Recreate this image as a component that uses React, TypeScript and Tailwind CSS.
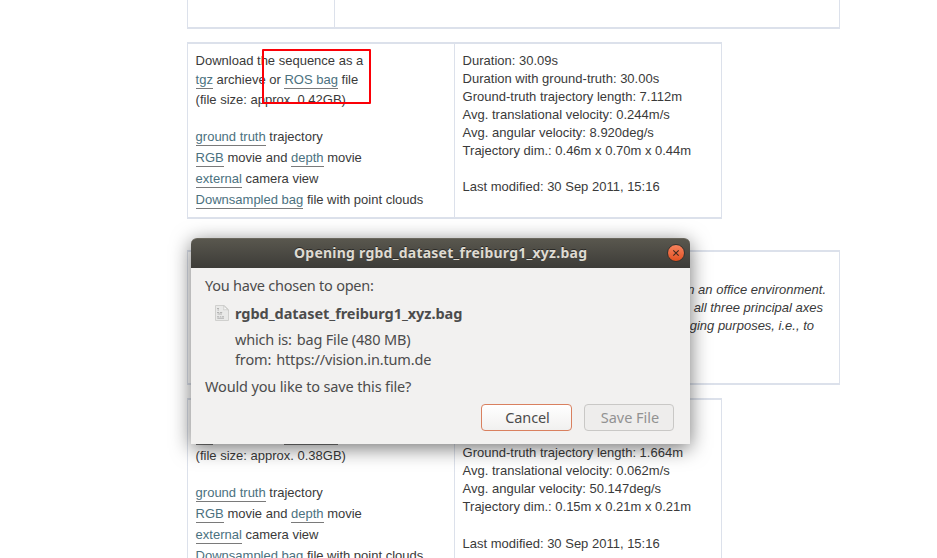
import type { ReactNode } from "react";

function Link({ children }: { children: ReactNode }) {
  return <a className="border-b border-[#7a7a7a] pb-px text-[#4b7180]">{children}</a>;
}

function Line({ className = "h-[21px]", children }: { className?: string; children?: ReactNode }) {
  return <div className={`whitespace-nowrap ${className}`}>{children}</div>;
}

type Sequence = {
  duration: string;
  truth: string;
  size: string;
  stats: string[];
  gap: string;
};

const sequences: Sequence[] = [
  {
    duration: "30.09s",
    truth: "30.00s",
    size: "0.42GB",
    stats: [
      "Ground-truth trajectory length: 7.112m",
      "Avg. translational velocity: 0.244m/s",
      "Avg. angular velocity: 8.920deg/s",
      "Trajectory dim.: 0.46m x 0.70m x 0.44m",
    ],
    gap: "h-[18px]",
  },
  {
    duration: "27.67s",
    truth: "27.67s",
    size: "0.38GB",
    stats: [
      "Ground-truth trajectory length: 1.664m",
      "Avg. translational velocity: 0.062m/s",
      "Avg. angular velocity: 50.147deg/s",
      "Trajectory dim.: 0.15m x 0.21m x 0.21m",
    ],
    gap: "h-[19px]",
  },
];

function SequenceTable({ data }: { data: Sequence }) {
  return (
    <section className="flex h-[177px] w-[535px] shrink-0 border-x border-y-2 border-[#dce1eb]">
      <div className="w-[267px] border-r border-[#dce1eb] pt-[8px] pl-[7.6px]">
        <Line className="h-[19px]">Download the sequence as a</Line>
        <Line className="h-[20px]">
          <Link>tgz</Link> archieve or <Link>ROS bag</Link> file
        </Line>
        <Line className="h-[37px]">(file size: approx. {data.size})</Line>
        <Line>
          <Link>ground truth</Link> trajectory
        </Line>
        <Line>
          <Link>RGB</Link> movie and <Link>depth</Link> movie
        </Line>
        <Line>
          <Link>external</Link> camera view
        </Line>
        <Line>
          <Link>Downsampled bag</Link> file with point clouds
        </Line>
      </div>
      <div className="pt-[8px] pl-[7.6px]">
        <Line className="h-[18px]">Duration: {data.duration}</Line>
        <Line className="h-[18px]">Duration with ground-truth: {data.truth}</Line>
        {data.stats.map((s) => (
          <Line key={s} className="h-[18px]">
            {s}
          </Line>
        ))}
        <div className={data.gap} />
        <Line className="h-[18px]">Last modified: 30 Sep 2011, 15:16</Line>
      </div>
    </section>
  );
}

function FileIcon() {
  return (
    <svg width="14" height="16" viewBox="0 0 14 16" className="shrink-0">
      <path d="M.5.5h8.8l4.2 4v11H.5z" fill="#e9e9e8" stroke="#d0d0ce" />
      <path d="M8.5.8c.6 1.6.4 3 .1 4.2 1.6-.5 3.3-.4 4.7.1z" fill="#fafafa" stroke="#c9c9c7" strokeWidth=".8" />
      <path d="M2 3.5h2M2.5 5h1.5M2 7.5h2M4.8 7.5h2.4M2.5 9h4.5M2 11.8h2M4.8 11.8h1.5M7 11.8h2M2.3 13.3h6.7" stroke="#b3b3b2" strokeWidth="1.1" />
    </svg>
  );
}

function Dialog() {
  return (
    <div className="absolute top-[238px] left-[191px] flex h-[206px] w-[499px] flex-col rounded-t-[6px] bg-[#f2f1f0] font-['Noto_Sans',sans-serif] text-[14.5px] text-[#4c4c4c] shadow-[0_4px_20px_rgba(0,0,0,0.55)]">
      <header className="flex h-[30px] shrink-0 items-center rounded-t-[6px] border-t border-[#6a675d] bg-linear-to-b from-[#59574e] to-[#3d3c38] pr-[5px] pl-[103px] font-bold text-[#dfdbd2]">
        <span className="flex-1 pb-[2px] text-[14px] leading-[20px] tracking-[0.24px] whitespace-nowrap [text-shadow:0_-1px_0_#2b2a27]">
          Opening rgbd_dataset_freiburg1_xyz.bag
        </span>
        <button className="flex size-[18px] -translate-y-px items-center justify-center rounded-full border border-[#34332f] bg-linear-to-b from-[#f6825c] to-[#e1501f]">
          <svg width="8" height="8" viewBox="0 0 8 8">
            <path d="M1.3 1.3l5.4 5.4M6.7 1.3L1.3 6.7" stroke="#402a1f" strokeWidth="1.1" />
          </svg>
        </button>
      </header>
      <div className="flex flex-1 flex-col pt-[7px] pr-[16px] pl-[14px] leading-[20px] whitespace-nowrap">
        <p className="tracking-[-0.24px]">You have chosen to open:</p>
        <div className="mt-[8px] flex h-[20px] items-center gap-[6px] pl-[10px]">
          <FileIcon />
          <span className="font-bold tracking-[-0.05px]">rgbd_dataset_freiburg1_xyz.bag</span>
        </div>
        <div className="mt-[6px] flex gap-[5px] pl-[30px] tracking-[-0.18px]">
          <span>which is:</span>
          <span>bag File (480 MB)</span>
        </div>
        <div className="flex gap-[5px] pl-[30px] tracking-[-0.15px]">
          <span>from:</span>
          <span>https://vision.in.tum.de</span>
        </div>
        <p className="mt-[7px] tracking-[-0.15px]">Would you like to save this file?</p>
        <div className="mt-[8px] flex justify-end gap-[12px]">
          <button className="h-[27px] w-[91px] rounded-[4px] border border-[#d9805f] bg-linear-to-b from-white to-[#f1f0ef] pb-[2px] pl-[2px] tracking-[-0.1px]">
            Cancel
          </button>
          <button className="h-[27px] w-[90px] rounded-[4px] border border-[#c9c8c6] bg-[#eeedec] pb-[2px] pl-[2px] text-[#929292]">
            Save File
          </button>
        </div>
      </div>
    </div>
  );
}

export default function App() {
  return (
    <main className="relative h-[558px] w-[937px] overflow-hidden bg-white font-['Liberation_Sans',Arial,sans-serif] text-[13px] leading-[18px] text-[#3a3a3a]">
      <div className="flex flex-col pl-[187px]">
        <section className="flex h-[29px] w-[653px] shrink-0 border-x border-b-2 border-[#dce1eb]">
          <div className="w-[147px] border-r border-[#dce1eb]" />
        </section>
        <div className="mt-[13px]">
          <SequenceTable data={sequences[0]} />
        </div>
        <section className="mt-[31px] h-[135px] w-[653px] border-x border-y-2 border-[#dce1eb] pt-[29px] text-right italic">
          <Line className="h-[18px] pr-[13px]">in an office environment.</Line>
          <Line className="h-[18px] pr-[16px]">all three principal axes</Line>
          <Line className="h-[18px] pr-[25px]">debugging purposes, i.e., to</Line>
        </section>
        <div className="mt-[13px]">
          <SequenceTable data={sequences[1]} />
        </div>
      </div>
      <Dialog />
      <div className="absolute top-[49px] left-[262px] h-[55px] w-[109px] rounded-[1px] border-2 border-[#fb0007]" />
    </main>
  );
}
